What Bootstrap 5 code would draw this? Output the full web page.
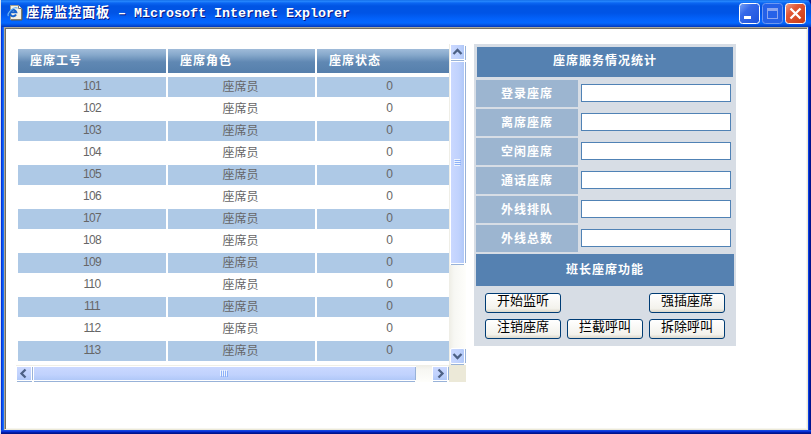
<!DOCTYPE html>
<html lang="zh-CN">
<head>
<meta charset="utf-8">
<meta name="viewport" content="width=device-width, initial-scale=1">
<title>座席监控面板</title>
<link href="https://cdn.jsdelivr.net/npm/bootstrap@5.3.0/dist/css/bootstrap.min.css" rel="stylesheet">
<style>
body{width:811px;height:434px;overflow:hidden;font:12px/20px "Liberation Sans","Noto Sans CJK SC",sans-serif;color:#666;background:#fff}
.xp-window{width:811px;height:434px;background:linear-gradient(90deg,#dce5ef 0 1px,#0831d9 1px 2px,#0855ee 2px 3px,#166aff 3px 4px,#7b766b 4px 5px,#0048dc 5px 807px,#0a3fe0 807px 809px,#001ea8 809px 810px,#00138c 810px)}
.xp-title{height:27px;padding:0 5px 0 6px;margin-left:1px;border-radius:0 6px 0 0;background:linear-gradient(#0a62e0 0,#2a8cff 1px,#0b66f2 3px,#0054e3 6px,#0054e6 13px,#0362fb 19px,#0367ff 23px,#0452e0 25px,#0038bd 27px)}
.xp-title h1{font:bold 13.34px/26px "Liberation Mono","Noto Sans CJK SC",monospace;color:#fff;text-shadow:1px 1px 0 #0a1883;margin:1px 0 0 3px;white-space:pre}
.xp-title .han{display:inline-block;letter-spacing:.66px;width:84px}
.caption-btns{gap:2px;padding-top:3px}
.client{margin:0 3px 0 4px;height:403px;background:#fff;border:solid;border-width:1px;border-color:#aca899 #ece9d8 #ece9d8 #aca899;box-shadow:inset 1px 1px #716f64,inset -1px -1px #f6f5ee}
.bottom-edge{height:4px;margin-left:1px;background:linear-gradient(#1348e0 0 1px,#0831d9 1px 2px,#001ea8 2px 3px,#00138c 3px)}
.seat-area{width:450px;height:338px;margin:16px 0 0 11px}
.seat-list{width:433px;height:321px;padding:5px 0 0 2px;overflow:hidden}
.seat-grid{display:grid;grid-template-columns:148px 147px 132px;column-gap:2px;row-gap:2px}
.seat-head{height:24px;margin-bottom:2px;padding-left:12px;line-height:24px;font-weight:bold;letter-spacing:1px;color:#fff;background:linear-gradient(#9fbbd9 0,#86a8cb 6px,#6088b3 13px,#557fac 24px)}
.seat-cell{height:20px;line-height:20px;text-align:center;padding-right:2px}
.seat-cell.stripe{background:#aec9e6}
.seat-cell.num{line-height:19px;letter-spacing:-.67px;padding-right:0}
.seat-cell.state{line-height:19px;padding:0 0 0 13px}
.stats{width:262px;height:302px;margin:16px 0 0 8px;background:#d7dde5;padding:3px 2px 0}
.stat-title{background:#5581b1;color:#fff;font-weight:bold;letter-spacing:1px;text-align:center}
.stat-title.first{height:30px;line-height:29px;margin:0 1px 3px}
.stat-title.second{height:32px;line-height:32px;margin-bottom:7px}
.stat-row{height:27px;margin-bottom:2px}
.stat-label{width:102px;height:27px;line-height:28px;background:#9cb5d0;color:#fff;font-weight:bold;letter-spacing:1px;text-align:center}
.stat-input{width:150px;height:18px;margin:0 0 1px 3px;border:1px solid #5082b5;border-radius:0;padding:0 2px;background:#fff}
.actions{display:grid;grid-template-columns:repeat(3,76px);gap:6px;padding-left:9px}
.xp-btn,.xp-btn:hover{height:20px;padding:0 0 4px;border:1px solid #003c74;border-radius:3px;background:linear-gradient(#fff,#f3f2ec 80%,#dcd7cb);color:#000;font-size:13px;line-height:14px}
svg{display:block}
</style>
</head>
<body>
<div class="xp-window">
  <header class="xp-title d-flex">
    <svg width="16" height="17" viewBox="0 0 16 17" class="mt-1" aria-hidden="true">
      <path d="M3.500 1.500h8l3 3v11h-11z" fill="#f3f1e4" stroke="#a5a18c"/>
      <path d="M11.500 1.500v3h3" fill="#fff" stroke="#777"/><path d="M15 5v11H4" fill="none" stroke="#605d4c"/>
      <path d="M9 10.600A3.200 3.200 0 1 1 9.300 8.300H3.500" fill="none" stroke="#1462cc" stroke-width="2"/>
      <path d="M1.500 12C-1 9.500 7 2 10.500 4.200" fill="none" stroke="#6ab4f8" stroke-width="1.200"/>
    </svg>
    <h1><span class="han">座席监控面板</span> – Microsoft Internet Explorer</h1>
    <div class="caption-btns d-flex ms-auto">
      <svg width="21" height="21" viewBox="0 0 21 21" aria-label="最小化">
        <defs><linearGradient id="blue" x2="1" y2="1"><stop stop-color="#7ba4f5"/><stop offset=".35" stop-color="#3669e9"/><stop offset="1" stop-color="#1c51dc"/></linearGradient><linearGradient id="red" x2="1" y2="1"><stop stop-color="#f0a18b"/><stop offset=".35" stop-color="#e35735"/><stop offset="1" stop-color="#c93b12"/></linearGradient></defs>
        <rect x=".5" y=".5" width="20" height="20" rx="3" fill="url(#blue)" stroke="#fff"/><path d="M5 13h7v3H5z" fill="#fff"/>
      </svg>
      <svg width="21" height="21" viewBox="0 0 21 21" aria-label="最大化"><rect x=".5" y=".5" width="20" height="20" rx="3" fill="#2561e8" stroke="#6d99f2"/><path d="M5 5h11v11H5zM6 8v7h9V8z" fill="#8aa5ef" fill-rule="evenodd"/></svg>
      <svg width="21" height="21" viewBox="0 0 21 21" aria-label="关闭"><rect x=".5" y=".5" width="20" height="20" rx="3" fill="url(#red)" stroke="#fff"/><path d="M5.500 5.500l10 10m0-10l-10 10" stroke="#fff" stroke-width="2.300"/></svg>
    </div>
  </header>
  <main class="client d-flex align-items-start">
    <section class="seat-area d-flex flex-wrap">
      <div class="seat-list"><div class="seat-grid" id="seats">
        <div class="seat-head">座席工号</div><div class="seat-head">座席角色</div><div class="seat-head">座席状态</div>
      </div></div>
      <svg width="17" height="321" viewBox="0 0 17 321" aria-hidden="true">
        <defs><linearGradient id="v"><stop stop-color="#cad8ff"/><stop offset=".6" stop-color="#c0d2fd"/><stop offset="1" stop-color="#b0c8f8"/></linearGradient>
        <linearGradient id="h" x2="0" y2="1"><stop stop-color="#cad8ff"/><stop offset=".6" stop-color="#c0d2fd"/><stop offset="1" stop-color="#b0c8f8"/></linearGradient>
        <linearGradient id="vt"><stop stop-color="#eeede5"/><stop offset=".3" stop-color="#f7f7f3"/><stop offset="1" stop-color="#fefefb"/></linearGradient>
        <linearGradient id="ht" x2="0" y2="1"><stop stop-color="#eeede5"/><stop offset=".3" stop-color="#f7f7f3"/><stop offset="1" stop-color="#fefefb"/></linearGradient></defs>
        <path d="M0 0h17v321H0z" fill="url(#vt)"/>
        <path d="M1 0h15v17H1zM1 17h15v204H1z" fill="#fff"/>
        <path d="M2 1h13v14H2zM2 18h13v201H2z" fill="url(#v)"/>
        <path d="M2 16.500h13M16.500 2v14M16.500 18v201M2 220.500h13" stroke="#98b2d8"/>
        <path d="M5 115.500h6M5 117.500h6M5 119.500h6M5 121.500h6" stroke="#eef4fe"/>
        <path d="M6 116.500h6M6 118.500h6M6 120.500h6" stroke="#8cb0f8"/>
        <rect x="1.500" y="304.500" width="14" height="15" rx="1.500" fill="url(#v)" stroke="#fff"/><path d="M2 320.500h13M16.500 305v14" stroke="#98b2d8"/>
        <path d="M4.500 10l4-4 4 4M4.500 310l4 4 4-4" fill="none" stroke="#4d6185" stroke-width="2.300"/>
      </svg>
      <svg width="433" height="17" viewBox="0 0 433 17" aria-hidden="true">
        <path d="M0 0h433v17H0z" fill="url(#ht)"/>
        <path d="M0 1h17v15H0zM17 1h383v15H17zM416 1h16v15h-16z" fill="#fff"/>
        <path d="M1 2h14v13H1zM18 2h381v13H18zM417 2h14v13h-14z" fill="url(#h)"/>
        <path d="M1 16.500h15M18 16.500h381M417 16.500h14M16.500 2v13M399.500 2v13M432.500 2v13" stroke="#98b2d8"/>
        <path d="M204.500 5v6M206.500 5v6M208.500 5v6M210.500 5v6" stroke="#eef4fe"/>
        <path d="M205.500 6v6M207.500 6v6M209.500 6v6M211.500 6v6" stroke="#8cb0f8"/>
        <path d="M9.500 4.500l-4 4 4 4M422.500 4.500l4 4-4 4" fill="none" stroke="#4d6185" stroke-width="2.300"/>
      </svg>
      <svg width="17" height="17" aria-hidden="true"><path d="M0 0h17v17H0z" fill="#ece9d8"/></svg>
    </section>
    <section class="stats">
      <div class="stat-title first">座席服务情况统计</div>
      <div class="stat-row d-flex align-items-center"><label class="stat-label" for="s1">登录座席</label><input class="stat-input" id="s1"></div>
      <div class="stat-row d-flex align-items-center"><label class="stat-label" for="s2">离席座席</label><input class="stat-input" id="s2"></div>
      <div class="stat-row d-flex align-items-center"><label class="stat-label" for="s3">空闲座席</label><input class="stat-input" id="s3"></div>
      <div class="stat-row d-flex align-items-center"><label class="stat-label" for="s4">通话座席</label><input class="stat-input" id="s4"></div>
      <div class="stat-row d-flex align-items-center"><label class="stat-label" for="s5">外线排队</label><input class="stat-input" id="s5"></div>
      <div class="stat-row d-flex align-items-center"><label class="stat-label" for="s6">外线总数</label><input class="stat-input" id="s6"></div>
      <div class="stat-title second">班长座席功能</div>
      <div class="actions">
        <button class="btn xp-btn">开始监听</button><span></span><button class="btn xp-btn">强插座席</button>
        <button class="btn xp-btn">注销座席</button><button class="btn xp-btn">拦截呼叫</button><button class="btn xp-btn">拆除呼叫</button>
      </div>
    </section>
  </main>
  <div class="bottom-edge"></div>
</div>
<script src="https://cdn.jsdelivr.net/npm/bootstrap@5.3.0/dist/js/bootstrap.bundle.min.js"></script>
<script>
const grid = document.getElementById('seats');
for (let id = 101; id <= 113; id++) {
  const stripe = id % 2 ? ' stripe' : '';
  grid.insertAdjacentHTML('beforeend',
    `<div class="seat-cell num${stripe}">${id}</div><div class="seat-cell${stripe}">座席员</div><div class="seat-cell state${stripe}">0</div>`);
}
</script>
</body>
</html>
